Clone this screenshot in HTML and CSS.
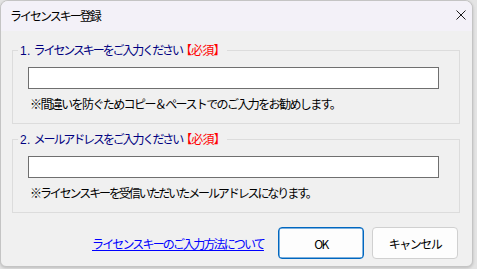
FILE: index.html
```html
<!DOCTYPE html>
<html lang="ja">
<head>
<meta charset="utf-8">
<title>ライセンスキー登録</title>
<link rel="stylesheet" href="styles.css">
</head>
<body>
<div class="window">
  <div class="titlebar">
    <span class="title">ライセンスキー登録</span>
    <svg class="close" width="10" height="10" viewBox="0 0 10 10"><path d="M0.5 0.5L9.5 9.5M9.5 0.5L0.5 9.5" stroke="#1a1a1a" stroke-width="1"/></svg>
  </div>
  <div class="content">
    <fieldset class="group">
      <legend class="legend"><span class="num">1.</span>ライセンスキーをご入力ください<span class="req">【必須】</span></legend>
      <div class="inner">
        <input class="field" type="text">
        <div class="note">※間違いを防ぐためコピー＆ペーストでのご入力をお勧めします。</div>
      </div>
    </fieldset>
    <fieldset class="group second">
      <legend class="legend"><span class="num">2.</span>メールアドレスをご入力ください<span class="req">【必須】</span></legend>
      <div class="inner">
        <input class="field" type="text">
        <div class="note tight">※ライセンスキーを受信いただいたメールアドレスになります。</div>
      </div>
    </fieldset>
    <div class="footer">
      <a class="link" href="#">ライセンスキーのご入力方法について</a>
      <button class="btn primary">OK</button>
      <button class="btn">キャンセル</button>
    </div>
  </div>
</div>
</body>
</html>
```
FILE: styles.css
```css
html, body {
  margin: 0;
  padding: 0;
}
body {
  background: #e4e4e4;
  width: 477px;
  height: 269px;
  overflow: hidden;
  font-family: "Noto Sans CJK JP", "Noto Sans", sans-serif;
  font-size: 12px;
  color: #000;
}
.window {
  box-sizing: border-box;
  width: 473px;
  height: 267px;
  background: #f0f0f0;
  border: 1px solid #c4c4c4;
  border-radius: 8px 8px 6px 6px;
  box-shadow: 0 1px 3px rgba(0,0,0,0.18);
  overflow: hidden;
  display: flex;
  flex-direction: column;
}
.titlebar {
  height: 30px;
  background: #f3f1f8;
  display: flex;
  align-items: center;
  justify-content: space-between;
  padding: 0 6px 0 9px;
  flex: none;
}
.title {
  letter-spacing: -2px;
  line-height: 14px;
  padding-bottom: 1px;
}
.close {
  margin-top: -2px;
}
.content {
  padding: 12px 0 0 11px;
  display: flex;
  flex-direction: column;
}
.group {
  margin: 0;
  padding: 0;
  width: 448px;
  box-sizing: border-box;
  border: 1px solid #dcdcdc;
  min-width: 0;
}
.second {
  margin-top: 8px;
}
.legend {
  margin-left: 5px;
  padding: 0 2px;
  color: #000080;
  line-height: 14px;
  letter-spacing: -2.1px;
}
.num {
  letter-spacing: 0.3px;
  margin-right: 3px;
  font-family: "Liberation Sans", sans-serif;
}
.req {
  color: #ff0000;
  letter-spacing: -0.8px;
  margin-left: -2px;
}
.inner {
  padding: 9px 0 12px 15px;
  display: flex;
  flex-direction: column;
}
.field {
  box-sizing: border-box;
  width: 411px;
  height: 22px;
  margin: 0;
  border: 1px solid #6f6f6f;
  background: #fff;
  padding: 0 3px;
  outline: none;
}
.note {
  margin-top: 8px;
  margin-left: 2px;
  line-height: 14px;
  letter-spacing: -1.6px;
}
.tight {
  letter-spacing: -2.1px;
}
.footer {
  display: flex;
  align-items: center;
  margin-top: 11px;
  width: 448px;
  padding-right: 2px;
  box-sizing: border-box;
  padding-top: 3px;
}
.link {
  margin-left: 80px;
  color: #0000ff;
  text-decoration: underline;
  letter-spacing: -1.85px;
  line-height: 14px;
  margin-top: 1px;
}
.btn {
  box-sizing: border-box;
  width: 86px;
  height: 32px;
  margin: 0 0 0 8px;
  padding: 0;
  background: #fdfdfd;
  border: 1px solid #d0d0d0;
  border-radius: 4px;
  font-family: "Noto Sans CJK JP", "Noto Sans", sans-serif;
  font-size: 12px;
  color: #000;
  letter-spacing: -1.5px;
}
.primary {
  margin-left: auto;
  border: 1px solid #0067c0;
  box-shadow: inset 0 0 0 0.5px #0067c0;
}
```
